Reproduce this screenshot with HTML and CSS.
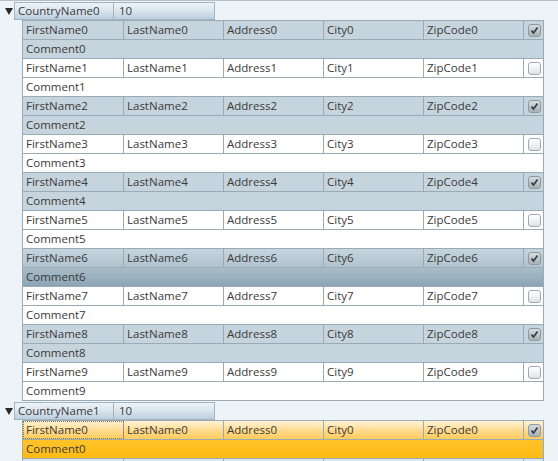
FILE: index.html
```html
<!DOCTYPE html>
<html>
<head>
<meta charset="utf-8">
<link rel="stylesheet" href="styles.css">
</head>
<body>
<div class="grid">
  <div class="group">
    <div class="ghead">
      <span class="tri"></span>
      <div class="gbox"><div class="gcell gname">CountryName0</div><div class="gcell gcount">10</div></div>
    </div>
    <div class="rows">
      <div class="item alt"><div class="drow"><div class="c">FirstName0</div><div class="c">LastName0</div><div class="c">Address0</div><div class="c">City0</div><div class="c">ZipCode0</div><div class="c cb"><span class="chk on"><svg viewBox="0 0 11 11"><path d="M2.5 5.5 L4.5 8 L8.5 2.5" fill="none" stroke="#3a4248" stroke-width="1.8"/></svg></span></div></div><div class="crow">Comment0</div></div>
      <div class="item"><div class="drow"><div class="c">FirstName1</div><div class="c">LastName1</div><div class="c">Address1</div><div class="c">City1</div><div class="c">ZipCode1</div><div class="c cb"><span class="chk"></span></div></div><div class="crow">Comment1</div></div>
      <div class="item alt"><div class="drow"><div class="c">FirstName2</div><div class="c">LastName2</div><div class="c">Address2</div><div class="c">City2</div><div class="c">ZipCode2</div><div class="c cb"><span class="chk on"><svg viewBox="0 0 11 11"><path d="M2.5 5.5 L4.5 8 L8.5 2.5" fill="none" stroke="#3a4248" stroke-width="1.8"/></svg></span></div></div><div class="crow">Comment2</div></div>
      <div class="item"><div class="drow"><div class="c">FirstName3</div><div class="c">LastName3</div><div class="c">Address3</div><div class="c">City3</div><div class="c">ZipCode3</div><div class="c cb"><span class="chk"></span></div></div><div class="crow">Comment3</div></div>
      <div class="item alt"><div class="drow"><div class="c">FirstName4</div><div class="c">LastName4</div><div class="c">Address4</div><div class="c">City4</div><div class="c">ZipCode4</div><div class="c cb"><span class="chk on"><svg viewBox="0 0 11 11"><path d="M2.5 5.5 L4.5 8 L8.5 2.5" fill="none" stroke="#3a4248" stroke-width="1.8"/></svg></span></div></div><div class="crow">Comment4</div></div>
      <div class="item"><div class="drow"><div class="c">FirstName5</div><div class="c">LastName5</div><div class="c">Address5</div><div class="c">City5</div><div class="c">ZipCode5</div><div class="c cb"><span class="chk"></span></div></div><div class="crow">Comment5</div></div>
      <div class="item sel"><div class="drow"><div class="c">FirstName6</div><div class="c">LastName6</div><div class="c">Address6</div><div class="c">City6</div><div class="c">ZipCode6</div><div class="c cb"><span class="chk on"><svg viewBox="0 0 11 11"><path d="M2.5 5.5 L4.5 8 L8.5 2.5" fill="none" stroke="#3a4248" stroke-width="1.8"/></svg></span></div></div><div class="crow">Comment6</div></div>
      <div class="item"><div class="drow"><div class="c">FirstName7</div><div class="c">LastName7</div><div class="c">Address7</div><div class="c">City7</div><div class="c">ZipCode7</div><div class="c cb"><span class="chk"></span></div></div><div class="crow">Comment7</div></div>
      <div class="item alt"><div class="drow"><div class="c">FirstName8</div><div class="c">LastName8</div><div class="c">Address8</div><div class="c">City8</div><div class="c">ZipCode8</div><div class="c cb"><span class="chk on"><svg viewBox="0 0 11 11"><path d="M2.5 5.5 L4.5 8 L8.5 2.5" fill="none" stroke="#3a4248" stroke-width="1.8"/></svg></span></div></div><div class="crow">Comment8</div></div>
      <div class="item"><div class="drow"><div class="c">FirstName9</div><div class="c">LastName9</div><div class="c">Address9</div><div class="c">City9</div><div class="c">ZipCode9</div><div class="c cb"><span class="chk"></span></div></div><div class="crow">Comment9</div></div>
    </div>
  </div>
  <div class="group">
    <div class="ghead">
      <span class="tri"></span>
      <div class="gbox"><div class="gcell gname">CountryName1</div><div class="gcell gcount">10</div></div>
    </div>
    <div class="rows">
      <div class="item cur"><div class="drow"><div class="c focus">FirstName0</div><div class="c">LastName0</div><div class="c">Address0</div><div class="c">City0</div><div class="c">ZipCode0</div><div class="c cb"><span class="chk on"><svg viewBox="0 0 11 11"><path d="M2.5 5.5 L4.5 8 L8.5 2.5" fill="none" stroke="#3a4248" stroke-width="1.8"/></svg></span></div></div><div class="crow">Comment0</div></div>
      <div class="item next"><div class="drow"><div class="c"></div><div class="c"></div><div class="c"></div><div class="c"></div><div class="c"></div><div class="c cb"></div></div></div>
    </div>
  </div>
</div>
</body>
</html>
```

FILE: styles.css
```css
html, body {
  margin: 0;
  padding: 0;
  height: 100%;
  overflow: hidden;
}
body {
  background: #eef3f7;
  font-family: "Open Sans", "Liberation Sans", sans-serif;
  font-size: 11.5px;
  color: #3a3a3a;
}
.grid {
  border-top: 1px solid #b4c0c8;
}
.group {
  padding-top: 1px;
}
.ghead {
  display: flex;
  align-items: center;
  height: 18px;
}
.tri {
  width: 0;
  height: 0;
  margin-left: 5px;
  margin-right: 1px;
  border-left: 4px solid transparent;
  border-right: 4px solid transparent;
  border-top: 7px solid #2a2a2a;
}
.gbox {
  display: flex;
  height: 18px;
  box-sizing: border-box;
  border: 1px solid #a3b3bf;
  background: linear-gradient(#edf3f7 0%, #dbe6ee 45%, #bccfdf 100%);
}
.gcell {
  line-height: 16px;
  box-sizing: border-box;
}
.gname {
  width: 99px;
  padding-left: 3px;
  border-right: 1px solid #a3b3bf;
}
.gcount {
  width: 100px;
  padding-left: 5px;
}
.rows {
  margin-left: 22px;
  width: 522px;
  box-sizing: border-box;
  border-left: 1px solid #9aabb6;
  border-right: 1px solid #9aabb6;
  border-top: 1px solid #9aabb6;
}
.drow {
  display: grid;
  grid-template-columns: 101px 100px 100px 100px 100px 19px;
  height: 19px;
  box-sizing: border-box;
  border-bottom: 1px solid #9aabb6;
}
.c {
  box-sizing: border-box;
  border-right: 1px solid #9aabb6;
  padding-left: 3px;
  line-height: 18px;
  white-space: nowrap;
  overflow: hidden;
}
.c.cb {
  border-right: none;
  display: flex;
  align-items: center;
  justify-content: center;
  padding-left: 1px;
}
.crow {
  height: 19px;
  box-sizing: border-box;
  border-bottom: 1px solid #9aabb6;
  padding-left: 3px;
  line-height: 18px;
}
.item {
  background: #ffffff;
}
.item.alt {
  background: #c6d4dd;
}
.item.next {
  background: #dfe6eb;
}
.item.sel .drow {
  background: linear-gradient(#c6d4dd, #b0c3cf);
}
.item.sel .crow {
  background: linear-gradient(#a9bdc9, #8ba4b4);
}
.item.cur .drow {
  background: linear-gradient(#fff4d6, #ffd98a 55%, #ffcb5c);
}
.item.cur .crow {
  background: linear-gradient(#ffc42a, #ffbb12);
}
.c.focus {
  outline: 1px dotted #8a7a50;
  outline-offset: -1px;
}
.chk {
  display: block;
  width: 13px;
  height: 13px;
  box-sizing: border-box;
  border: 1px solid #a2abb1;
  border-radius: 3px;
  background: linear-gradient(#ffffff, #dfe3e6);
}
.chk.on {
  border-color: #8e989f;
  background: linear-gradient(#d7dcdf, #a9b1b7);
}
.chk svg {
  display: block;
  width: 11px;
  height: 11px;
}
```
